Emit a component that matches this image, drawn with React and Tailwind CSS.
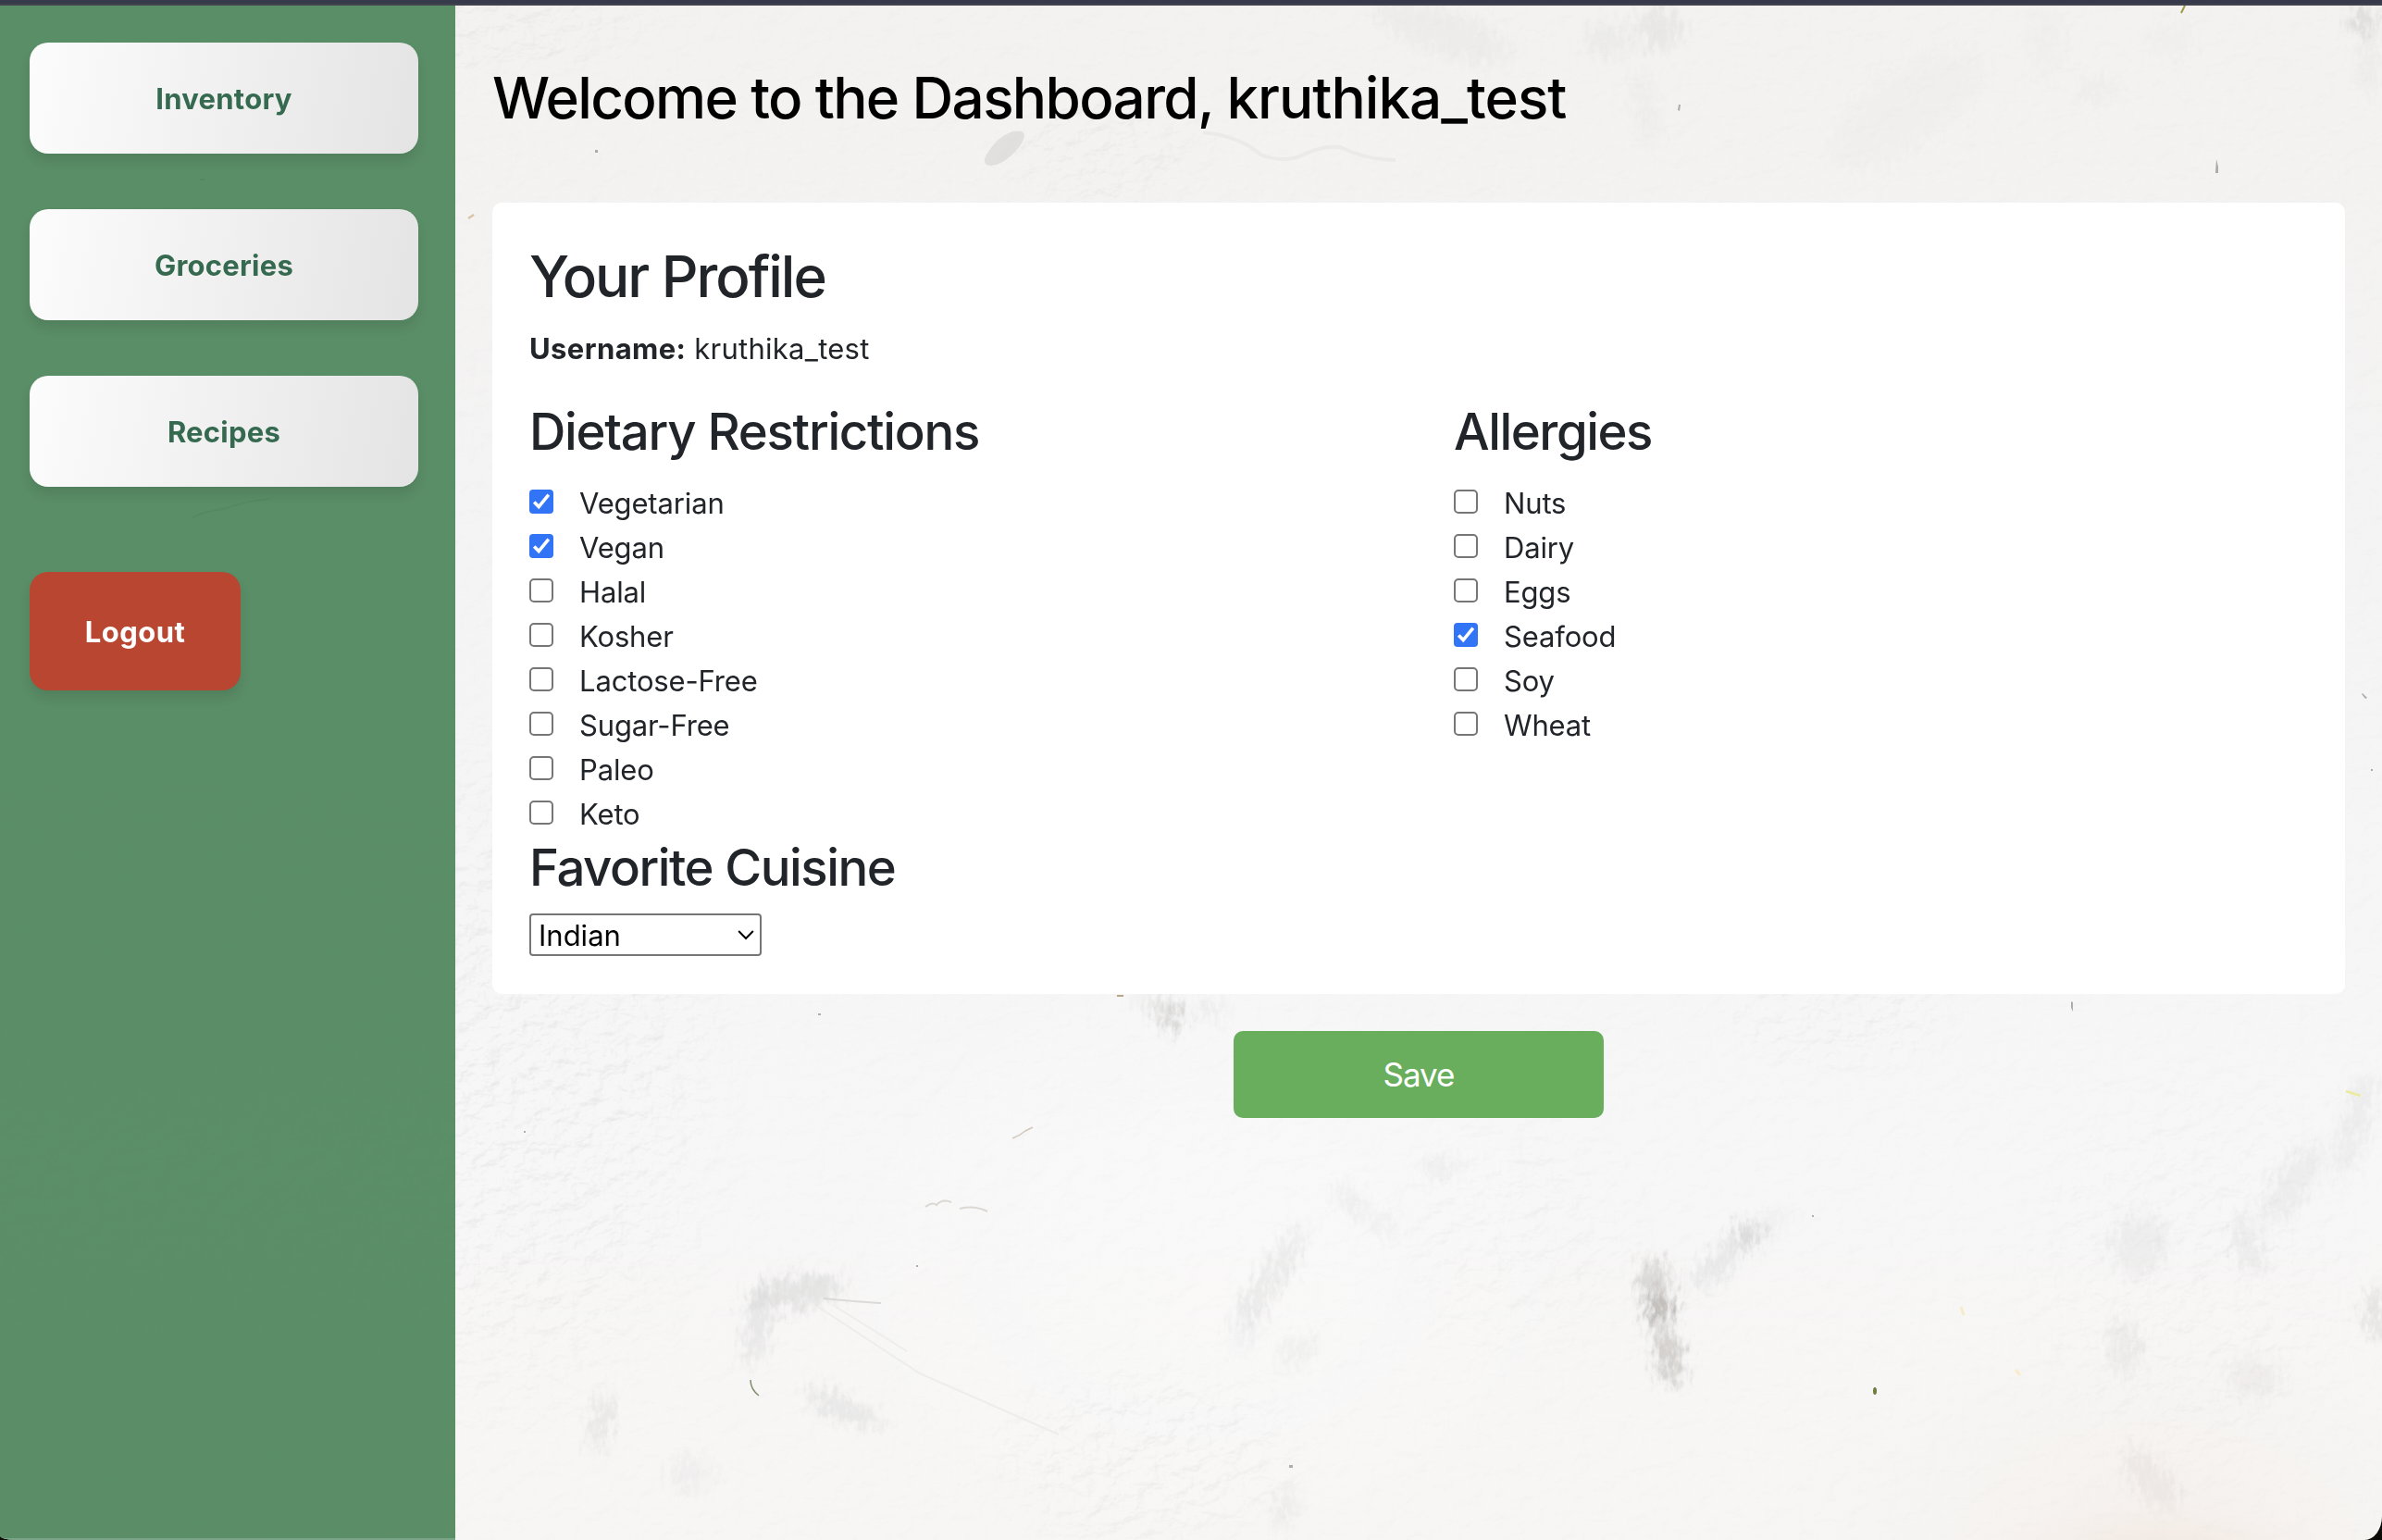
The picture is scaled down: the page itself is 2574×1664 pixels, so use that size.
const NAV = ["Inventory", "Groceries", "Recipes"];

const DIETS = [
  ["Vegetarian", true],
  ["Vegan", true],
  ["Halal", false],
  ["Kosher", false],
  ["Lactose-Free", false],
  ["Sugar-Free", false],
  ["Paleo", false],
  ["Keto", false],
];

const ALLERGIES = [
  ["Nuts", false],
  ["Dairy", false],
  ["Eggs", false],
  ["Seafood", true],
  ["Soy", false],
  ["Wheat", false],
];

// Plaster smudges: [cx, cy, rx, ry, rotation, opacity, fill]
const SMUDGES = [
  [862, 1396, 50, 16, -8, 0.2, "#77777a"],
  [818, 1432, 10, 42, 8, 0.18, "#77777a"],
  [912, 1522, 46, 9, 22, 0.18, "#77777a"],
  [650, 1535, 9, 32, 12, 0.17, "#77777a"],
  [747, 1592, 24, 18, 0, 0.07, "#77777a"],
  [1376, 1378, 11, 62, 32, 0.15, "#77777a"],
  [1345, 1432, 14, 30, 10, 0.07, "#77777a"],
  [1462, 1300, 26, 10, 40, 0.1, "#77777a"],
  [1496, 1326, 16, 6, 30, 0.12, "#77777a"],
  [1402, 1460, 22, 12, -30, 0.09, "#77777a"],
  [1388, 1628, 9, 22, 20, 0.14, "#77777a"],
  [1265, 1098, 11, 14, 0, 0.42, "#777774"],
  [1245, 1086, 22, 4, 40, 0.2, "#777774"],
  [1310, 1092, 14, 8, 0, 0.14, "#777774"],
  [1790, 1398, 16, 40, -8, 0.32, "#7d7772"],
  [1792, 1412, 8, 14, 0, 0.6, "#6b625a"],
  [1803, 1466, 14, 28, -10, 0.42, "#7d746d"],
  [1888, 1335, 12, 14, 25, 0.34, "#77777a"],
  [1855, 1366, 34, 12, -45, 0.16, "#77777a"],
  [1915, 1322, 26, 8, -30, 0.08, "#77777a"],
  [1558, 1262, 24, 9, 0, 0.1, "#77777a"],
  [2312, 1345, 30, 34, 20, 0.09, "#77777a"],
  [2296, 1455, 16, 32, 0, 0.1, "#77777a"],
  [2430, 1345, 14, 34, -15, 0.1, "#77777a"],
  [2478, 1278, 50, 18, -55, 0.1, "#77777a"],
  [2544, 1215, 14, 60, 15, 0.1, "#77777a"],
  [2436, 1488, 28, 22, 0, 0.08, "#7d746d"],
  [2324, 1598, 16, 42, -35, 0.1, "#7d746d"],
  [2568, 1418, 10, 30, 0, 0.22, "#7d746d"],
  [2060, 118, 100, 40, -35, 0.03, "#77777a"],
  [1792, 30, 24, 22, 40, 0.11, "#77777a"],
  [1738, 44, 24, 18, 0, 0.07, "#77777a"],
  [1778, 118, 12, 44, -12, 0.05, "#77777a"],
  [2210, 45, 20, 40, 0, 0.03, "#77777a"],
  [2345, 42, 24, 16, 0, 0.04, "#77777a"],
  [2554, 24, 14, 12, 30, 0.26, "#77726c"],
  [2560, 70, 12, 32, 0, 0.06, "#77777a"],
  [2268, 96, 24, 12, 0, 0.07, "#b09a90"],
  [1560, 34, 80, 24, 20, 0.06, "#77777a"],
];

const SPECKS = [
  "M643 162h3v3h-3z",
  "M216 193h5v2h-5z",
  "M2553 749l5 5l-2 1l-4-5z",
  "M2562 831h2v2h-2z",
  "M2395 172l2 8l0 7l-3 0z",
  "M1814 113l2 0l-1 7l-2-1z",
  "M884 1095h3v2h-3z",
  "M566 1222h2v2h-2z",
  "M990 1367h2v2h-2z",
  "M1393 1583h4v3h-4z",
  "M1958 1313h2v2h-2z",
  "M2238 1082l2 1l0 10l-2-4z",
];

function PlasterWall() {
  return (
    <svg className="absolute inset-0 h-full w-full" viewBox="0 0 2574 1658" preserveAspectRatio="none" aria-hidden="true">
      <defs>
        <linearGradient id="wall" x1="0" y1="0" x2="0" y2="1">
          <stop offset="0" stopColor="#f3f2f1" />
          <stop offset="0.35" stopColor="#f5f4f4" />
          <stop offset="0.75" stopColor="#f8f7f7" />
          <stop offset="1" stopColor="#f7f6f5" />
        </linearGradient>
        <radialGradient id="peach">
          <stop offset="0" stopColor="#f1e6dd" stopOpacity="0.8" />
          <stop offset="1" stopColor="#f5eee9" stopOpacity="0" />
        </radialGradient>
        <radialGradient id="spot">
          <stop offset="0" stopColor="#fff" />
          <stop offset="0.6" stopColor="#fff" stopOpacity="0.7" />
          <stop offset="1" stopColor="#fff" stopOpacity="0" />
        </radialGradient>
        <filter id="grain" x="0" y="0" width="100%" height="100%" colorInterpolationFilters="sRGB">
          <feTurbulence type="fractalNoise" baseFrequency="0.045 0.06" numOctaves="4" seed="11" />
          <feColorMatrix values="0 0 0 0 0  0 0 0 0 0  0 0 0 0 0  1 0 0 0 0" />
          <feDiffuseLighting surfaceScale="6" diffuseConstant="1.07" lightingColor="#ffffff">
            <feDistantLight azimuth="225" elevation="68" />
          </feDiffuseLighting>
        </filter>
        <filter id="smudge" x="-10%" y="-10%" width="120%" height="120%" colorInterpolationFilters="sRGB">
          <feGaussianBlur stdDeviation="8" result="b" />
          <feTurbulence type="fractalNoise" baseFrequency="0.16 0.07" numOctaves="4" seed="4" result="n" />
          <feDisplacementMap in="b" in2="n" scale="40" xChannelSelector="R" yChannelSelector="G" />
        </filter>
        <mask id="rough">
          <rect width="2574" height="1658" fill="#fff" fillOpacity="0.2" />
          <ellipse cx="560" cy="1150" rx="250" ry="400" fill="url(#spot)" opacity="0.9" />
          <ellipse cx="1240" cy="1570" rx="190" ry="110" fill="url(#spot)" opacity="0.7" />
          <ellipse cx="1990" cy="1090" rx="140" ry="70" fill="url(#spot)" opacity="0.6" />
          <ellipse cx="1640" cy="1330" rx="150" ry="150" fill="url(#spot)" opacity="0.35" />
          <ellipse cx="1190" cy="160" rx="130" ry="70" fill="url(#spot)" opacity="0.6" />
          <ellipse cx="540" cy="20" rx="180" ry="60" fill="url(#spot)" opacity="0.6" />
          <ellipse cx="2360" cy="1370" rx="190" ry="240" fill="url(#spot)" opacity="0.35" />
        </mask>
      </defs>
      <rect width="2574" height="1658" fill="url(#wall)" />
      <ellipse cx="2330" cy="1658" rx="420" ry="260" fill="url(#peach)" opacity="0.5" />
      <ellipse cx="2340" cy="1668" rx="200" ry="52" fill="url(#peach)" />
      <ellipse cx="1300" cy="1350" rx="420" ry="330" fill="url(#spot)" opacity="0.25" />
      <g mask="url(#rough)" className="mix-blend-multiply">
        <rect width="2574" height="1658" filter="url(#grain)" opacity="0.1" />
      </g>
      <g filter="url(#smudge)" opacity="0.75">
        {SMUDGES.map(([cx, cy, rx, ry, rot, o, fill], i) => (
          <ellipse key={i} cx={cx} cy={cy - 6} rx={rx} ry={ry} fill={fill} opacity={o} transform={`rotate(${rot} ${cx} ${cy - 6})`} />
        ))}
      </g>
      <g transform="translate(0 -6)">
        <path d="M1066 178q-5-4 2-14q10-16 26-22q12-2 13 4q0 8-14 22q-16 14-27 10z" fill="#d4d3d2" opacity="0.6" />
        {SPECKS.map((d) => (
          <path key={d} d={d} fill="#555" opacity="0.45" />
        ))}
        <path d="M811 1491q0 10 9 17" fill="none" stroke="#7d8a66" strokeWidth="1.5" />
        <path d="M1094 1230q8-3 14-8l8-4" fill="none" stroke="#b8a898" strokeWidth="1.5" opacity="0.6" />
        <path d="M1000 1304q8-6 12-2q6-7 16-3M1037 1306q16-4 30 3" fill="none" stroke="#a39d92" strokeWidth="2" opacity="0.35" />
        <path d="M890 1403q40 4 62 5" fill="none" stroke="#cfcecd" strokeWidth="2" opacity="0.7" />
        <path d="M884 1412l110 72l150 66M900 1410l80 50" fill="none" stroke="#eeedec" strokeWidth="2" />
        <path d="M1207 1076h7" stroke="#9b8560" strokeWidth="2" opacity="0.7" />
        <path d="M506 236l6-4" stroke="#dcc3a6" strokeWidth="2.5" />
        <path d="M2361 6l-4 8" stroke="#9a9a40" strokeWidth="2" />
        <path d="M2535 1179l16 5" stroke="#ebea9f" strokeWidth="2.5" />
        <path d="M2119 1412l3 9M2178 1480l5 6" stroke="#f8ebc8" strokeWidth="3" />
        <ellipse cx="2026" cy="1503" rx="2" ry="4" fill="#6f7d3e" />
        <path d="M1300 143q40 4 62 24q20 8 40 3q28-14 46-11q30 14 60 14" fill="none" stroke="#ebeae9" strokeWidth="4" />
        <path d="M208 559q14-7 34-9q20-8 50-11" fill="none" stroke="#777" strokeWidth="2" opacity="0.4" />
      </g>
    </svg>
  );
}

function Checkbox({ checked }) {
  return checked ? (
    <svg className="mt-[10px] size-[26px] shrink-0" viewBox="0 0 26 26" aria-hidden="true">
      <rect width="26" height="26" rx="4" fill="#3174f6" />
      <path d="M5.2 13.4l5 5.2L20.8 5.6" fill="none" stroke="#fff" strokeWidth="3.6" />
    </svg>
  ) : (
    <span className="mt-[10px] size-[26px] shrink-0 rounded-[5px] border-2 border-[#767676] bg-white" />
  );
}

function OptionList({ items }) {
  return (
    <ul className="mt-[19px]">
      {items.map(([label, checked]) => (
        <li key={label} className="flex h-12 gap-7">
          <Checkbox checked={checked} />
          <span className="text-[31px] leading-[50px] tracking-[-0.15px]">{label}</span>
        </li>
      ))}
    </ul>
  );
}

export default function App() {
  return (
    <div className="h-[1664px] w-[2574px] bg-[#0d0b08] font-['Inter','Liberation_Sans',sans-serif] text-[#212529]">
      <div className="h-1 bg-[#363a4b]" />
      <div className="h-0.5 bg-[#43424f]" />
      <div className="relative flex h-[1658px] overflow-hidden [border-radius:0_0_19px_16px/0_0_26px_5px]">
        <PlasterWall />
        <nav className="relative flex w-[492px] flex-col items-start border-b-2 border-[#7ba587] bg-[rgba(73,131,88,0.9)] px-8 pt-10">
          {NAV.map((label) => (
            <a
              key={label}
              className="mb-15 flex h-[120px] w-[420px] items-center justify-center rounded-[20px] bg-[linear-gradient(100deg,#fcfcfc,#e4e4e4)] pt-[3px] text-[31px] font-bold tracking-[0.25px] text-[#356a50] shadow-[0_8px_12px_rgba(0,0,0,0.1)]"
            >
              {label}
            </a>
          ))}
          <button className="mt-8 h-32 w-[228px] rounded-[20px] bg-[#b84631] pt-[2px] text-[31px] font-bold tracking-[0.45px] text-white shadow-[0_8px_12px_rgba(0,0,0,0.1)]">
            Logout
          </button>
        </nav>
        <main className="relative flex flex-1 flex-col px-10 pt-[61px]">
          <h1 className="text-[62px] leading-[77px] font-medium tracking-[-1.65px] whitespace-nowrap text-black">
            Welcome to the Dashboard, <span className="tracking-[-1px]">kruthika_test</span>
          </h1>
          <section className="mt-[75px] h-[855px] rounded-[10px] bg-white p-10">
            <h2 className="text-[62px] leading-[79px] font-medium tracking-[-2.05px]">Your Profile</h2>
            <p className="mt-[15px] text-[31px] leading-[48px] tracking-[0.25px]">
              <strong className="font-bold tracking-[0.4px]">Username:</strong> kruthika_test
            </p>
            <div className="mt-[31px] grid grid-cols-[999px_1fr]">
              <div>
                <h3 className="text-[54.5px] leading-[68px] font-medium tracking-[-1.27px]">Dietary Restrictions</h3>
                <OptionList items={DIETS} />
              </div>
              <div>
                <h3 className="text-[54.5px] leading-[68px] font-medium tracking-[-1.45px]">Allergies</h3>
                <OptionList items={ALLERGIES} />
              </div>
            </div>
            <h3 className="text-[54.5px] leading-[68px] font-medium tracking-[-1.46px]">Favorite Cuisine</h3>
            <div className="mt-4 flex h-[46px] w-[251px] items-center justify-between rounded-[4px] border-2 border-[#767676] bg-white pr-[6px] pl-2 text-[31px] leading-none text-black">
              <span>Indian</span>
              <svg className="h-3 w-[18px]" viewBox="0 0 18 12" fill="none" aria-hidden="true">
                <path d="M1.2 2l7.8 8l7.8-8" stroke="#000" strokeWidth="2" />
              </svg>
            </div>
          </section>
          <button className="mt-10 h-[94px] w-[400px] self-center rounded-[10px] bg-[#68ae5d] text-[35px] tracking-[-1px] text-white">
            Save
          </button>
        </main>
      </div>
    </div>
  );
}
